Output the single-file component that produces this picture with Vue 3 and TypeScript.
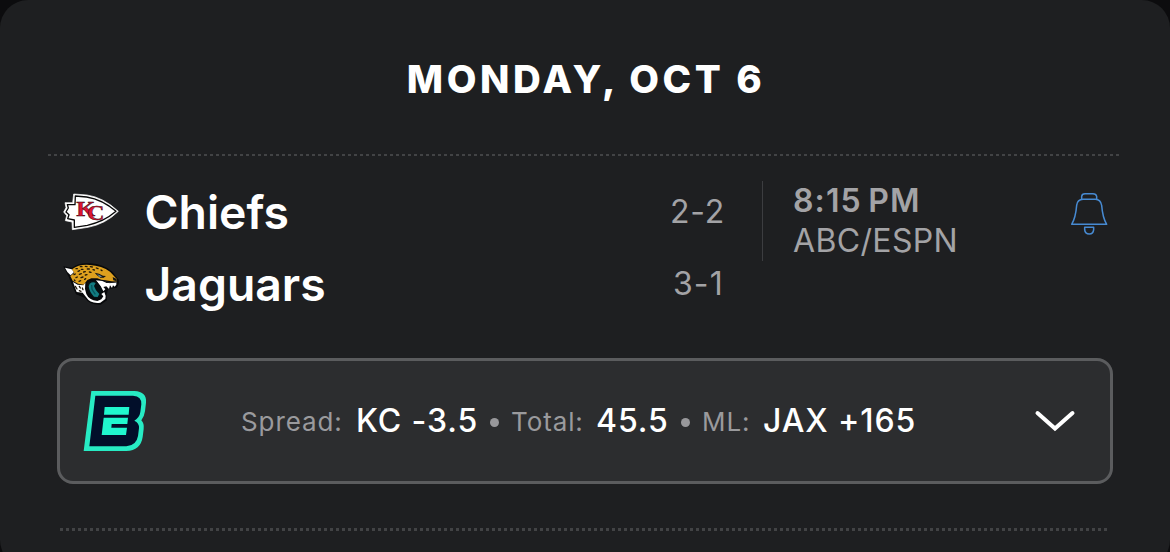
<script setup lang="ts">
interface Team {
  id: 'kc' | 'jax'
  name: string
  record: string
}

interface Odd {
  label: string
  value: string
}

const teams: Team[] = [
  { id: 'kc', name: 'Chiefs', record: '2-2' },
  { id: 'jax', name: 'Jaguars', record: '3-1' },
]

const odds: Odd[] = [
  { label: 'Spread:', value: 'KC -3.5' },
  { label: 'Total:', value: '45.5' },
  { label: 'ML:', value: 'JAX +165' },
]
</script>

<template>
  <main class="screen">
    <section class="card">
      <h1 class="date">MONDAY, OCT 6</h1>
      <div class="rule"></div>

      <div class="game">
        <div class="teams">
          <div v-for="team in teams" :key="team.id" class="team">
            <svg v-if="team.id === 'kc'" class="logo" width="58" height="40" viewBox="36 21 174 120">
              <path d="M71 27 L111 30 Q160 37 205 79 Q167 117 114 127 L67 134 L66 111 L46 107 L50 92 L41 81 L48 68 L45 53 L68 53Z" fill="#fff" stroke="#fff" stroke-width="2" stroke-linejoin="round" />
              <path d="M76 33 L110 36 Q158 44 198 79 Q161 111 112 121 L73 127 L73 105 L53 101 L57 89 L48 81 L55 69 L52 59 L75 59Z" fill="#fff" stroke="#080808" stroke-width="4" stroke-linejoin="round" />
              <text class="monogram" x="66 93" y="92 106" transform="scale(1.19 1)">KC</text>
            </svg>
            <svg v-else class="logo" width="58" height="46" viewBox="36 18 174 138">
              <path d="M40 34 L66 38 Q88 22 120 25 Q160 27 187 50 L206 74 Q209 86 200 98 L181 101 L174 103 L170 119 L171 136 L152 149 Q119 151 105 129 L78 118 L65 88 L55 63Z" fill="#08090b" />
              <path d="M45 38 L65 43 L72 51 L62 61 Q52 54 45 38Z" fill="#fff" />
              <path d="M66 43 Q88 27 119 30 Q156 32 180 50 L201 73 L199 80 L184 79 L166 76 L154 74 L142 70 L124 70 L112 75 L101 89 L84 86 L68 77 L61 63 L73 54Z" fill="#dda01e" />
              <path d="M69 81 L83 89 L100 91 L106 83 L105 102 L109 117 Q117 135 142 138 L154 133 L160 124 L154 117 L163 111 L167 123 L166 132 L151 143 Q121 147 108 126 L98 113 L80 111Z" fill="#fff" />
              <path d="M138 76 L157 78 L170 84 L199 82 L199 89 L194 95 L189 91 L186 99 L180 91 L177 102 L169 94 L160 96 L166 103 L160 109 L153 95Z" fill="#fff" />
              <path d="M112 83 Q126 72 141 80 L151 93 L156 110 L151 117 L151 127 L140 132 Q117 124 112 103Z" fill="#061013" />
              <path d="M119 86 Q128 79 137 84 L132 93 L138 106 L148 117 L143 126 L132 125 Q118 111 116 94Z" fill="#137d82" />
              <path d="M125 90 L126 103 L136 118" fill="none" stroke="#07575e" stroke-width="4" />
              <path d="M134 53 L147 56 L159 62 L168 63 L161 68 L151 68 L141 61Z" fill="#101315" />
              <path d="M141 57 L149 61 L157 65 L149 66Z" fill="#74919a" />
              <path d="M188 66 L200 72 L200 79 L190 76Z" fill="#111315" />
              <path d="M162 78 L179 83 L198 81" fill="none" stroke="#17191c" stroke-width="3" />
              <g fill="none" stroke="#20180a" stroke-width="4" stroke-linecap="round">
                <path d="M78 41h4 M91 35h5 M106 34l5 1 M121 35l6 1 M139 39l5 2 M94 43l5 0 M112 42l6 0 M129 44l4 1 M84 49l5 -2 M101 51l5 -1 M118 51l5 1 M72 59l4 -2 M88 58l6 -2 M106 60l5 -1 M78 68l4 -2 M93 68l6 -2 M73 75l2 2 M87 79l5 -2 M104 73l3 -2 M153 45l3 2" />
                <path d="M76 94l5 8 M88 94l3 5 M97 99l2 5 M88 107l5 2" />
              </g>
            </svg>
            <span class="name">{{ team.name }}</span>
            <span class="record" :class="team.id">{{ team.record }}</span>
          </div>
        </div>

        <div class="broadcast">
          <div class="time">8:15&#8201;PM</div>
          <div class="network">ABC/ESPN</div>
        </div>

        <svg class="bell" width="39" height="46" viewBox="45 33 117 138">
          <g fill="none" stroke="#478ad2" stroke-width="4.5" stroke-linejoin="round">
            <path d="M80 58 L80 49 Q81 41 90 41 H114 Q123 41 125 49 V58" />
            <path d="M50 133 Q62 113 65 76 Q67 59 84 58 H121 Q137 59 140 76 Q143 113 155 133Z" />
            <path d="M89 142 H116 V149 Q115 162 103 162 Q90 162 89 149Z" />
          </g>
        </svg>
      </div>

      <div class="odds">
        <svg class="book" width="66" height="64" viewBox="21 27 198 192">
          <path d="M49 33 H178 Q216 35 213 68 L210 94 Q208 109 199 121 Q208 130 206 147 L203 171 Q197 212 154 213 H26Z" fill="#27ebc4" />
          <path d="M61 47 H174 Q201 49 199 73 L196 96 Q194 112 178 122 Q193 129 192 144 L189 168 Q184 197 154 199 H43Z" fill="#020f2a" />
          <path d="M89 81 H163 L161 104 H87Z M86 113 H159 L157 132 H110 L109 143 H156 L153 165 H80Z" fill="#20f7ce" />
        </svg>
        <div class="lines">
          <template v-for="(odd, i) in odds" :key="odd.label">
            <i v-if="i > 0" class="dot"></i>
            <span class="label">{{ odd.label }}</span>
            <span class="value">{{ odd.value }}</span>
          </template>
        </div>
        <svg class="chevron" width="42" height="26" viewBox="0 0 42 26">
          <path d="M3.5 4 L21 19.5 L38.5 4" fill="none" stroke="#fff" stroke-width="4" stroke-linecap="round" stroke-linejoin="miter" />
        </svg>
      </div>

      <div class="rule lower"></div>
    </section>
  </main>
</template>

<style>
body {
  margin: 0;
  background: #0c0c0e;
}
</style>

<style scoped>
.screen {
  width: 1170px;
  height: 552px;
  overflow: hidden;
  background: #0c0c0e;
  font-family: Inter, "Liberation Sans", sans-serif;
}
.card {
  box-sizing: border-box;
  height: 568px;
  padding-top: 1px;
  border-radius: 28px;
  background: #1e1f21;
}
.date {
  height: 153px;
  margin: 0;
  line-height: 157px;
  text-align: center;
  text-indent: 2px;
  color: #fff;
  font-size: 38.5px;
  font-weight: 800;
  letter-spacing: 3.5px;
}
.rule {
  height: 2px;
  margin: 0 51px 0 48px;
  background: repeating-linear-gradient(90deg, #424345 0 3px, transparent 3px 6px);
}
.game {
  display: flex;
  height: 202px;
}
.teams {
  flex: none;
  width: 663px;
  padding: 20px 37px 0 62px;
}
.team {
  display: flex;
  align-items: center;
  height: 72px;
}
.logo {
  flex: none;
}
.monogram {
  fill: #dc1434;
  stroke: #170308;
  stroke-width: 1.2px;
  font-family: "Liberation Serif", serif;
  font-size: 61px;
  font-weight: 700;
}
.name {
  flex: 1;
  margin-left: 24.5px;
  color: #fff;
  font-size: 46.3px;
  font-weight: 600;
}
.record {
  color: #a3a3a6;
  font-size: 32px;
  line-height: 40px;
  letter-spacing: 0.8px;
}
.record.jax {
  margin-right: 1px;
  letter-spacing: 1.2px;
}
.broadcast {
  box-sizing: border-box;
  flex: none;
  width: 307px;
  height: 80px;
  margin-top: 25px;
  padding-left: 30px;
  border-left: 1px solid #3c3d40;
  color: #a3a3a6;
  line-height: 40px;
  font-size: 32px;
  letter-spacing: 0.35px;
}
.time {
  letter-spacing: 1.1px;
  font-weight: 600;
}
.bell {
  flex: none;
  margin: 35px 0 0 1px;
}
.odds {
  box-sizing: border-box;
  display: flex;
  align-items: center;
  height: 126px;
  margin: 0 57px;
  padding: 0 34px 0 22px;
  border: 3px solid #5b5c5e;
  border-radius: 16px;
  background: #2c2d2f;
}
.book {
  flex: none;
}
.lines {
  display: grid;
  grid-template-columns: 115px 133px 22px 85px 84px 22px 61px auto;
  align-items: center;
  flex: 1;
  margin-left: 93px;
  line-height: 40px;
  white-space: nowrap;
}
.label {
  padding-top: 2px;
  color: #9a9a9d;
  font-size: 26px;
  letter-spacing: 0.9px;
}
.value {
  color: #fff;
  font-size: 32px;
  font-weight: 500;
  letter-spacing: 0.9px;
}
.dot {
  width: 9px;
  height: 9px;
  margin: 2px 0 0 1px;
  border-radius: 50%;
  background: #98989b;
}
.chevron {
  flex: none;
  margin-top: 1px;
}
.lower {
  height: 3px;
  margin: 44px 63px 0 60px;
}
</style>
